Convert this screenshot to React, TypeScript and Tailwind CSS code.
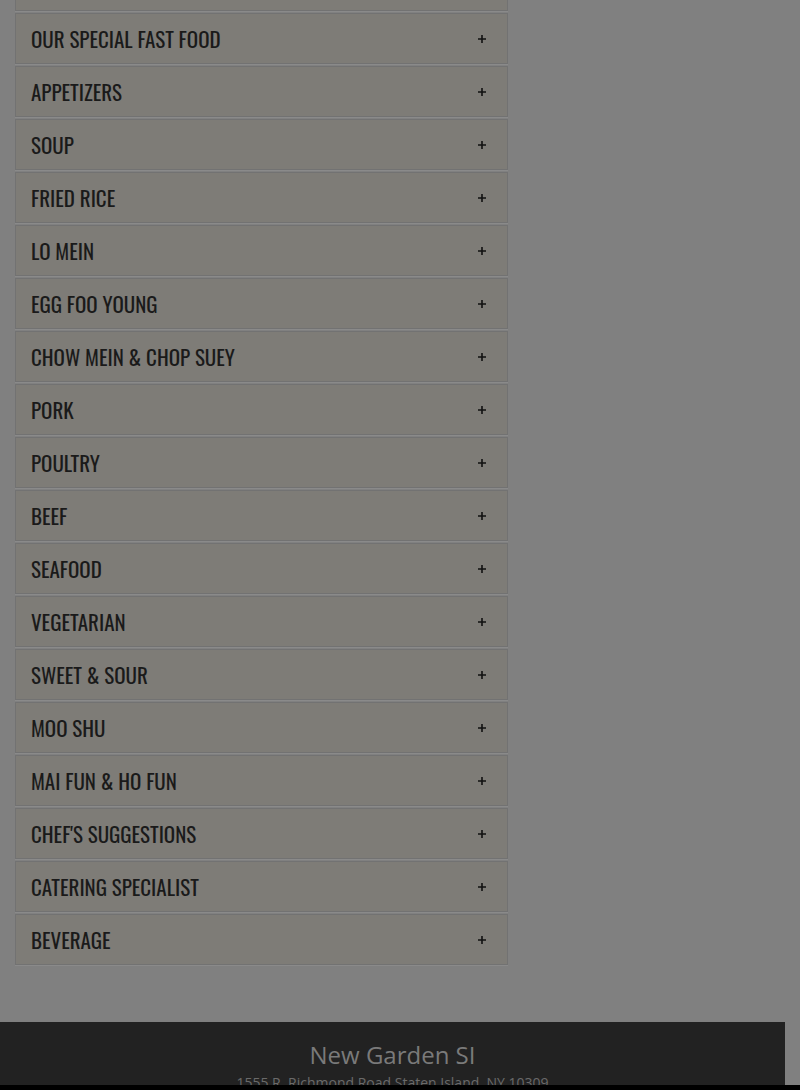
const categories = [
  "LUNCH SPECIAL",
  "OUR SPECIAL FAST FOOD",
  "APPETIZERS",
  "SOUP",
  "FRIED RICE",
  "LO MEIN",
  "EGG FOO YOUNG",
  "CHOW MEIN & CHOP SUEY",
  "PORK",
  "POULTRY",
  "BEEF",
  "SEAFOOD",
  "VEGETARIAN",
  "SWEET & SOUR",
  "MOO SHU",
  "MAI FUN & HO FUN",
  "CHEF'S SUGGESTIONS",
  "CATERING SPECIALIST",
  "BEVERAGE",
];

const PlusIcon = () => (
  <svg width="10" height="10" viewBox="0 0 10 10" className="block">
    <path d="M5 1v8M1 5h8" stroke="#111" strokeWidth="1.6" />
  </svg>
);

const App = () => {
  return (
    <div className="w-full h-[1090px] overflow-hidden bg-[#808080] flex flex-col">
      <div className="w-[785px] -mt-[40px]">
        <div className="pl-[15px] w-[508px]">
          {categories.map((name) => (
            <div
              key={name}
              className="h-[51px] mb-[2px] border border-[#727272] bg-[#7e7c77] shadow-[0_1px_0_#8a8a8a] flex items-center justify-between pl-[15px] pr-[20px]"
            >
              <span className="text-[21px] text-[#1a1a1a] font-['Oswald','Liberation_Sans_Narrow','DejaVu_Sans_Condensed',sans-serif]">
                {name}
              </span>
              <PlusIcon />
            </div>
          ))}
        </div>

        {/* footer */}
        <div className="mt-[57px] bg-[#222222] h-[63px] pt-[17px] text-center overflow-hidden">
          <div className="text-[24px] leading-[32px] text-[#7a7a7a] font-['Open_Sans',sans-serif]">
            New Garden SI
          </div>
          <div className="mt-[2px] text-[14px] leading-[20px] text-[#6a6a6a] font-['Open_Sans',sans-serif]">
            1555 R. Richmond Road Staten Island, NY 10309
          </div>
        </div>
      </div>
      <div className="h-[5px] bg-black w-full" />
    </div>
  );
};

export default App;
